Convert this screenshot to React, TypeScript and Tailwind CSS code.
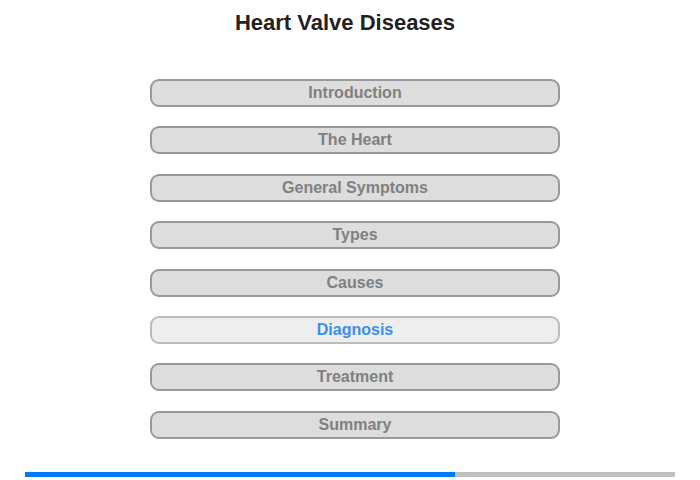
import React from 'react';

const sections = [
  'Introduction',
  'The Heart',
  'General Symptoms',
  'Types',
  'Causes',
  'Diagnosis',
  'Treatment',
  'Summary',
];

const active = 'Diagnosis';

const App: React.FC = () => {
  return (
    <div className="w-[700px] h-[480px] bg-white relative font-['Liberation_Sans',Arial,sans-serif] overflow-hidden">
      <h1 className="pt-[10px] text-center text-[22px] leading-[26px] font-bold text-[#222] pr-[10px]">
        Heart Valve Diseases
      </h1>

      {/* Menu */}
      <div className="mt-[43px] ml-[150px] w-[410px] flex flex-col gap-[19.4px]">
        {sections.map((s) => (
          <button
            key={s}
            className={`h-[28px] rounded-[9px] border-2 text-[16px] font-bold leading-[24px] ${
              s === active
                ? 'bg-[#eeeeee] border-[#bbbbbb] text-[#3a8ef0]'
                : 'bg-[#dddddd] border-[#999999] text-[#808080]'
            }`}
          >
            {s}
          </button>
        ))}
      </div>

      {/* Progress */}
      <div className="absolute left-[25px] top-[472px] w-[650px] h-[5px] bg-[#c0c0c0]">
        <div className="h-full w-[430px] bg-[#007bff]" />
      </div>
    </div>
  );
};

export default App;
